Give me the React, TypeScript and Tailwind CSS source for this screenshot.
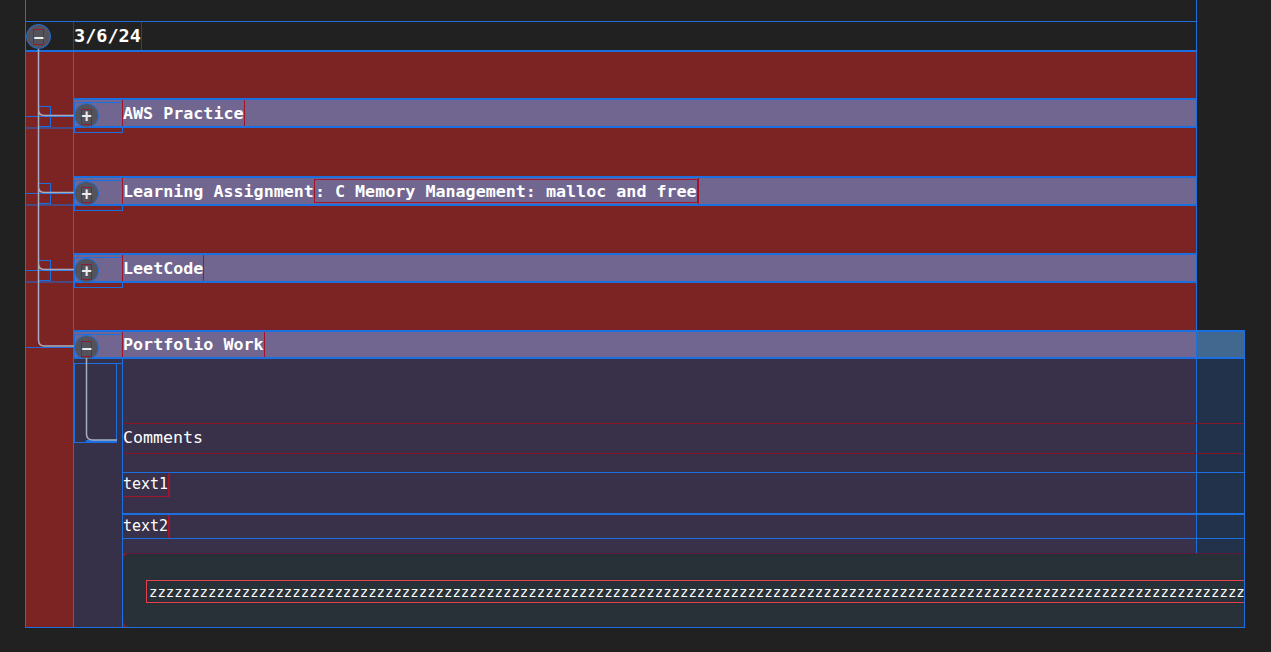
import React from 'react';

const rows = [
  { title: 'AWS Practice', gap: 'mt-[46px]' },
  { title: 'Learning Assignment', sub: ': C Memory Management: malloc and free', gap: 'mt-[48px]' },
  { title: 'LeetCode', gap: 'mt-[47px]' },
];

// branch y positions inside the left rail svg (rail starts at y=52)
const branches = [63.5, 140.5, 217.5];

function Toggle({ open }: { open?: boolean }) {
  return (
    <span className="flex h-[25px] w-[25px] shrink-0 items-center justify-center rounded-full border border-[#1b6fe0] bg-[#54535b]">
      <span className="mt-[2px] flex h-[16px] w-[11px] items-center justify-center border border-[#8a1d3e] text-[17px] font-bold leading-none text-[#ececec]">
        {open ? '−' : '+'}
      </span>
    </span>
  );
}

function RowToggle({ open }: { open?: boolean }) {
  return (
    <div className="w-[48px] shrink-0">
      <div className="mt-[2px] h-[31px] w-[49px] border border-[#1b6fe0]">
        <div className="-ml-px">
          <Toggle open={open} />
        </div>
      </div>
    </div>
  );
}

function TaskRow({ title, sub, gap }: { title: string; sub?: string; gap: string }) {
  return (
    <div className={`${gap} flex h-[30px] shrink-0 border-y-2 border-[#1b6fe0] bg-[#706690]`}>
      <RowToggle />
      <div className="flex items-center border-x border-[#a3142a] text-[16.7px] font-bold leading-none text-white">
        {title}
        {sub && <span className="border border-[#a3142a] py-[3px]">{sub}</span>}
      </div>
    </div>
  );
}

function Portfolio() {
  return (
    <div className="mt-[47px] flex h-[298px] w-[1171px] shrink-0 flex-col border-r border-b border-[#1b6fe0]">
      <div className="flex h-[29px] shrink-0 border-y-2 border-[#1b6fe0] bg-[linear-gradient(to_right,#706690_1122px,#1b6fe0_1122px,#1b6fe0_1123px,#436890_1123px)]">
        <RowToggle open />
        <div className="flex items-center border-x border-[#a3142a] text-[16.7px] font-bold leading-none text-white">
          Portfolio Work
        </div>
      </div>

      <div className="flex flex-1">
        {/* child rail */}
        <div className="w-[49px] shrink-0 border-r border-[#1b6fe0] bg-[#363048]">
          <svg width="48" height="267" className="overflow-visible">
            <rect x="0.5" y="4.5" width="42" height="79" fill="none" stroke="#1b6fe0" strokeWidth="1" />
            <line x1="0" y1="4.5" x2="48" y2="4.5" stroke="#1b6fe0" strokeWidth="1" />
            <line x1="12" y1="82" x2="43" y2="82" stroke="#1b6fe0" strokeWidth="2" />
            <path d="M12.5 -1 V75 Q12.5 81 19 81 H43" fill="none" stroke="#a7adbf" strokeWidth="1.5" />
          </svg>
        </div>

        <div className="flex w-[1121px] flex-col">
          <div className="flex flex-col bg-[linear-gradient(to_right,#383149_1073px,#1b6fe0_1073px,#1b6fe0_1074px,#22324a_1074px)]">
            <div className="flex h-[114px] flex-col justify-end border-b border-[#1b6fe0] pb-[18px]">
              <div className="flex h-[31px] items-center border-y border-[#8a1424] text-[16.6px] leading-none text-white">
                Comments
              </div>
            </div>
            <div className="h-[42px] border-b-2 border-[#1b6fe0]">
              <div className="flex h-[24px] w-fit items-center border-r-2 border-b border-[#a3142a] text-[15px] leading-none text-white">
                text1
              </div>
            </div>
            <div className="h-[24px] border-b border-[#1b6fe0]">
              <div className="flex h-[23px] w-fit items-center border-r-2 border-[#a3142a] text-[15px] leading-none text-white">
                text2
              </div>
            </div>
            <div className="h-[14px]" />
          </div>

          <div className="flex-1 overflow-hidden rounded-l-[7px] border-t border-l border-[#5e1a3c] bg-[#283137] pt-[26px] pl-[22px]">
            <div className="flex h-[23px] w-[1200px] items-center whitespace-nowrap border-[1.5px] border-[#e5404f] pl-[2px] text-[14px] leading-none text-white">
              {'z'.repeat(160)}
            </div>
          </div>
        </div>
      </div>
    </div>
  );
}

export default function App() {
  return (
    <div className="h-[652px] w-full overflow-hidden bg-[#212121] pl-[25px] font-['DejaVu_Sans_Mono',monospace] text-[#f2f2f2]">
      <div className="flex h-[628px] w-[1172px] flex-col border-x border-b border-[#1b6fe0]">
        <div className="h-[21px] shrink-0" />

        {/* date header */}
        <div className="flex h-[31px] shrink-0 border-t border-b-2 border-[#1b6fe0]">
          <div className="flex w-[47px] shrink-0 items-center">
            <Toggle open />
          </div>
          <div className="flex items-center border-x border-[#a3142a] text-[18.5px] font-bold leading-none text-white">
            3/6/24
          </div>
        </div>

        <div className="flex h-[575px] shrink-0 bg-[#7c2424]">
          {/* tree rail */}
          <div className="w-[48px] shrink-0 border-r border-[#1b6fe0]">
            <svg width="47" height="575" className="overflow-visible">
              {branches.map((b) => (
                <g key={b} fill="none" stroke="#1b6fe0" strokeWidth="1">
                  <rect x="12.5" y={b - 9} width="12" height="20" />
                  <line x1="-1" y1={b + 1} x2="47" y2={b + 1} />
                  <line x1="-1" y1={b + 12.5} x2="47" y2={b + 12.5} />
                </g>
              ))}
              <line x1="-1" y1="295.5" x2="47" y2="295.5" stroke="#1b6fe0" strokeWidth="1" />
              <path
                d="M12.5 -3 V57.5 Q12.5 63.5 18.5 63.5 H48 M12.5 57.5 V134.5 Q12.5 140.5 18.5 140.5 H48 M12.5 134.5 V211.5 Q12.5 217.5 18.5 217.5 H48 M12.5 211.5 V288 Q12.5 294 18.5 294 H48"
                fill="none"
                stroke="#a7adbf"
                strokeWidth="1.5"
              />
            </svg>
          </div>

          <div className="flex w-[1122px] shrink-0 flex-col">
            {rows.map((r) => (
              <TaskRow key={r.title} {...r} />
            ))}
            <Portfolio />
          </div>
        </div>
      </div>
    </div>
  );
}
